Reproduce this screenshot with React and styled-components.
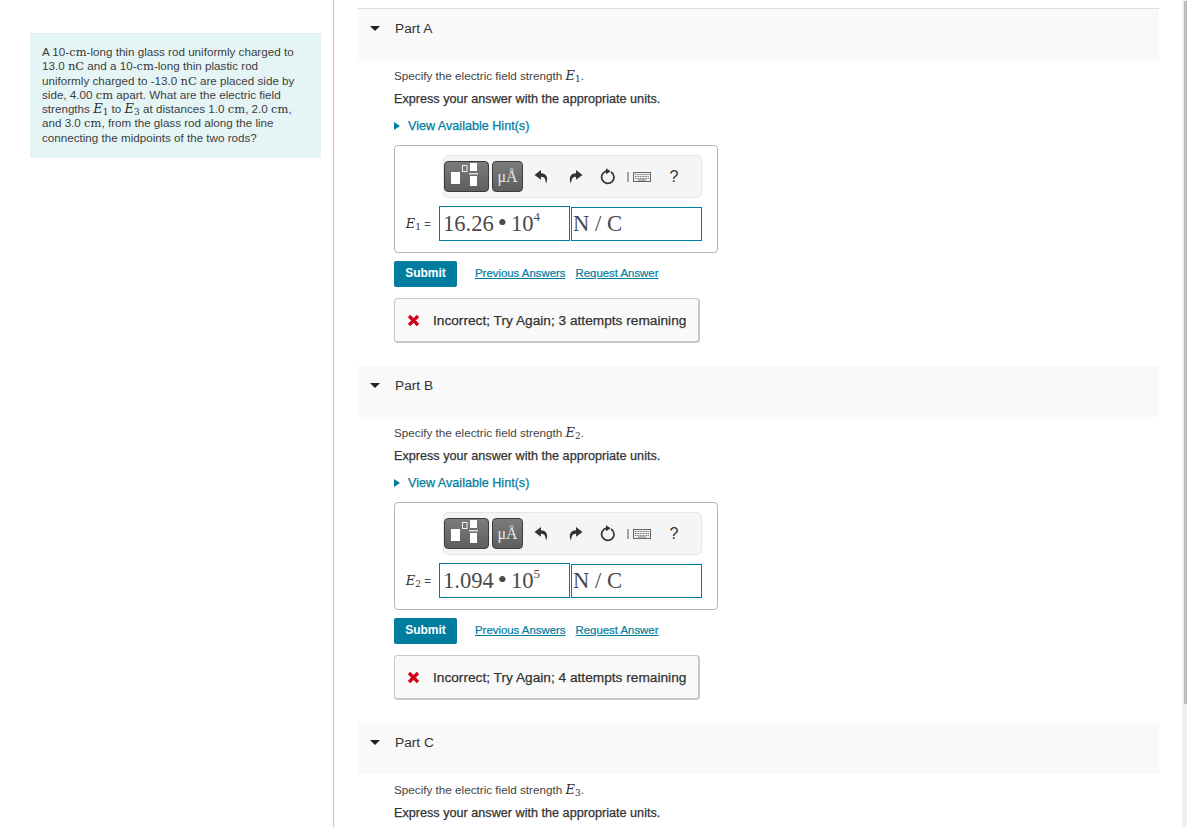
import React from 'react';
import styled, { createGlobalStyle } from 'styled-components';

const GlobalStyle = createGlobalStyle`
  html, body {
    margin: 0;
    padding: 0;
    height: 100%;
    overflow: hidden;
    background: #fff;
  }
  body {
    font-family: 'Liberation Sans', Arial, sans-serif;
    color: #333;
  }
`;

const Page = styled.div`
  display: flex;
  height: 827px;
  width: 1187px;
  overflow: hidden;
  position: relative;
`;

const LeftColumn = styled.aside`
  box-sizing: border-box;
  width: 334px;
  flex: none;
  border-right: 1px solid #c4c4c4;
  padding: 33px 12px 0 30px;
`;

const Statement = styled.div`
  box-sizing: border-box;
  height: 125px;
  background: #e5f5f6;
  border-top: 1px solid #dcebec;
  padding: 11px 12px 0;
  font-size: 11.65px;
  line-height: 14.3px;
  color: #3d3d3d;
`;

const MathText = styled.span`
  font-family: 'DejaVu Serif', 'Liberation Serif', serif;
  font-size: ${props => props.$size || 11.5}px;
  font-style: ${props => (props.$italic ? 'italic' : 'normal')};
  line-height: 0;
  color: #333;
`;

const Sub = styled.sub`
  font-size: 9px;
  line-height: 0;
  vertical-align: -2px;
  font-style: normal;
`;

const RightColumn = styled.main`
  width: 801px;
  margin-left: 24px;
  flex: none;
  padding-top: 8px;
`;

const Part = styled.section`
  height: 357px;
`;

const PartHeader = styled.div`
  box-sizing: border-box;
  height: 52px;
  display: flex;
  align-items: flex-start;
  padding: 12px 0 0 12px;
  background: #f9f9f9;
  border-top: 1px solid ${props => (props.$first ? '#dcdcdc' : '#fff')};
  font-size: 13.7px;
  line-height: 16px;
  color: #333;
`;

const Caret = styled.span`
  width: 0;
  height: 0;
  margin: 5px 15px 0 0;
  border-left: 5px solid transparent;
  border-right: 5px solid transparent;
  border-top: 5px solid #222;
`;

const PartBody = styled.div`
  padding: 8px 0 0 36px;
`;

const Prompt = styled.p`
  margin: 0;
  height: 23px;
  line-height: 16px;
  font-size: 11.7px;
  color: #444;
`;

const Instruction = styled.p`
  margin: 0;
  height: 27px;
  line-height: 16px;
  font-size: 12.65px;
  color: #333;
  -webkit-text-stroke: 0.25px #333;
`;

const HintRow = styled.div`
  display: flex;
  align-items: center;
  height: 16px;
  font-size: 12.6px;
  color: #007c9e;
  -webkit-text-stroke: 0.25px #007c9e;
`;

const HintCaret = styled.span`
  width: 0;
  height: 0;
  margin-right: 8px;
  border-top: 4px solid transparent;
  border-bottom: 4px solid transparent;
  border-left: 6px solid #007c9e;
`;

const AnswerBox = styled.div`
  box-sizing: border-box;
  width: 324px;
  height: 108px;
  margin-top: 11px;
  padding: 9px 15px 0 0;
  border: 1px solid #b3b3b3;
  border-radius: 4px;
  display: flex;
  flex-direction: column;
  align-items: flex-end;
`;

const Toolbar = styled.div`
  box-sizing: border-box;
  width: 259px;
  height: 43px;
  padding: 5px 0 0;
  display: flex;
  align-items: flex-start;
  background: #f5f5f5;
  border: 1px solid #e5e5e5;
  border-radius: 5px;
`;

const TemplateButton = styled.div`
  box-sizing: border-box;
  width: ${props => props.$width}px;
  height: 31px;
  margin-right: 3px;
  background: linear-gradient(#7c7c7c, #5e5e5e);
  border: 1px solid #3c3c3c;
  border-radius: 4px;
  color: #e6e6e6;
  display: flex;
  align-items: center;
  justify-content: center;
  font-family: 'Liberation Serif', serif;
  font-size: 16px;
`;

const ToolIcon = styled.span`
  display: flex;
  align-items: center;
  justify-content: center;
  height: 31px;
  width: ${props => props.$width}px;
  flex: none;
  color: #333;
  font-size: 16px;
`;

const InputRow = styled.div`
  display: flex;
  align-items: center;
  height: 35px;
  margin-top: 8px;
  align-self: stretch;
  justify-content: flex-end;
`;

const Label = styled.span`
  margin-right: 8px;
  font-size: 11.5px;
  color: #444;
  white-space: nowrap;
`;

const Field = styled.div`
  box-sizing: border-box;
  width: 131px;
  height: ${props => props.$height}px;
  margin-left: ${props => props.$gap || 0}px;
  padding: ${props => props.$top}px 0 0 ${props => props.$inset}px;
  border: 1px solid #007c9e;
  font-family: 'Liberation Serif', serif;
  font-size: 22.6px;
  line-height: 31px;
  color: #4a4a4a;
  white-space: nowrap;
`;

const Dot = styled.span`
  margin: 0 4px;
  font-size: 26px;
  line-height: 0;
`;

const Sup = styled.sup`
  font-size: 13px;
  line-height: 0;
  vertical-align: 10px;
`;

const ActionRow = styled.div`
  display: flex;
  align-items: center;
  margin-top: 8px;
  height: 26px;
`;

const SubmitButton = styled.button`
  width: 63px;
  height: 26px;
  margin-right: 18px;
  padding: 0 0 2px;
  border: 0;
  border-radius: 2px;
  background: #007c9e;
  color: #fff;
  font: 700 12px 'Liberation Sans', Arial, sans-serif;
`;

const LinkText = styled.a`
  margin: 0 10px 2px 0;
  font-size: 11.4px;
  color: #007c9e;
  text-decoration: underline;
  -webkit-text-stroke: 0.2px #007c9e;
`;

const Feedback = styled.div`
  box-sizing: border-box;
  width: 306px;
  height: 45px;
  margin-top: 11px;
  padding-left: 12px;
  display: flex;
  align-items: center;
  background: #f9f9f9;
  border: 1px solid #c8c8c8;
  border-bottom-width: 2px;
  border-right-width: 2px;
  border-radius: 4px;
  font-size: 13.7px;
  color: #333;
  -webkit-text-stroke: 0.25px #333;
  white-space: nowrap;
`;

const CrossIcon = styled.svg`
  width: 13px;
  height: 13px;
  margin-right: 13px;
  flex: none;
`;

const Scrollbar = styled.div`
  position: absolute;
  top: 0;
  right: 0;
  bottom: 0;
  width: 5px;
  background: #efefef;
  &::after {
    content: '';
    position: absolute;
    top: 1px;
    left: 2px;
    right: 0;
    height: 703px;
    background: #bdbdbd;
  }
`;

const ExpressionTemplateIcon = () => (
  <svg width="36" height="27" viewBox="0 0 36 27">
    <rect x="2" y="9" width="9" height="12" fill="#fff" />
    <rect x="13.5" y="2.5" width="4.5" height="6" fill="none" stroke="#eee" strokeWidth="1" />
    <rect x="21" y="0" width="7" height="8" fill="#fff" />
    <rect x="20" y="10" width="9" height="1.5" fill="#ddd" />
    <rect x="21" y="13" width="7" height="10" fill="#fff" />
  </svg>
);

const UndoIcon = ({ flip }) => (
  <svg width="15" height="15" viewBox="0 0 14 14" style={flip ? { transform: 'scaleX(-1)' } : undefined}>
    <path d="M6.5 1 .5 5.6 6.5 10V7.2c2.6 0 3.8 1 4.2 3.6L11.4 13.5C13.6 8 11.6 4.1 6.5 4Z" fill="#333" />
  </svg>
);

const ResetIcon = () => (
  <svg width="16" height="17" viewBox="0 0 16 17">
    <path d="M11 3.9a6.2 6.2 0 1 1-4.6-.7" fill="none" stroke="#333" strokeWidth="1.7" />
    <path d="M6 0.3v6l4.6-3z" fill="#333" />
  </svg>
);

const KeyboardIcon = () => (
  <svg width="24" height="12" viewBox="0 0 24 12">
    <rect x="0.5" y="1" width="1" height="10" fill="#555" />
    <rect x="6.5" y="1.5" width="17" height="9" fill="#eee" stroke="#666" />
    <path d="M8 3.5h14M8 5.5h14M8 7.5h14" stroke="#777" strokeWidth="1" strokeDasharray="1 0.6" />
    <path d="M11 9h8" stroke="#777" strokeWidth="1" />
  </svg>
);

const AnswerToolbar = () => (
  <Toolbar>
    <TemplateButton $width={45}>
      <ExpressionTemplateIcon />
    </TemplateButton>
    <TemplateButton $width={31}>μÅ</TemplateButton>
    <ToolIcon $width={30}><UndoIcon /></ToolIcon>
    <ToolIcon $width={38}><UndoIcon flip /></ToolIcon>
    <ToolIcon $width={28}><ResetIcon /></ToolIcon>
    <ToolIcon $width={34}><KeyboardIcon /></ToolIcon>
    <ToolIcon $width={36}>?</ToolIcon>
  </Toolbar>
);

const E = ({ n }) => (
  <MathText $italic $size={13}>E<Sub>{n}</Sub></MathText>
);

const PartBlock = ({ name, n, value, exponent, attempts, first, cut }) => (
  <Part>
    <PartHeader $first={first}>
      <Caret />
      {name}
    </PartHeader>
    <PartBody>
      <Prompt>Specify the electric field strength <E n={n} />.</Prompt>
      <Instruction>Express your answer with the appropriate units.</Instruction>
      {!cut && (
        <>
          <HintRow><HintCaret />View Available Hint(s)</HintRow>
          <AnswerBox>
            <AnswerToolbar />
            <InputRow>
              <Label><E n={n} /> =</Label>
              <Field $height={35} $inset={3} $top={1}>{value}<Dot>•</Dot>10<Sup>{exponent}</Sup></Field>
              <Field $height={34} $gap={1} $inset={1} $top={0}>N / C</Field>
            </InputRow>
          </AnswerBox>
          <ActionRow>
            <SubmitButton>Submit</SubmitButton>
            <LinkText>Previous Answers</LinkText>
            <LinkText>Request Answer</LinkText>
          </ActionRow>
          <Feedback>
            <CrossIcon viewBox="0 0 13 13">
              <path d="M2 2 11 11M11 2 2 11" stroke="#d0021b" strokeWidth="3.2" />
            </CrossIcon>
            Incorrect; Try Again; {attempts} attempts remaining
          </Feedback>
        </>
      )}
    </PartBody>
  </Part>
);

export default function App() {
  return (
    <Page>
      <GlobalStyle />
      <LeftColumn>
        <Statement>
          A 10-<MathText>cm</MathText>-long thin glass rod uniformly charged to<br />
          13.0 <MathText>nC</MathText> and a 10-<MathText>cm</MathText>-long thin plastic rod<br />
          uniformly charged to -13.0 <MathText>nC</MathText> are placed side by<br />
          side, 4.00 <MathText>cm</MathText> apart. What are the electric field<br />
          strengths <E n={1} /> to <E n={3} /> at distances 1.0 <MathText>cm</MathText>, 2.0 <MathText>cm</MathText>,<br />
          and 3.0 <MathText>cm</MathText>, from the glass rod along the line<br />
          connecting the midpoints of the two rods?
        </Statement>
      </LeftColumn>
      <RightColumn>
        <PartBlock first name="Part A" n={1} value="16.26" exponent={4} attempts={3} />
        <PartBlock name="Part B" n={2} value="1.094" exponent={5} attempts={4} />
        <PartBlock name="Part C" n={3} cut />
      </RightColumn>
      <Scrollbar />
    </Page>
  );
}
